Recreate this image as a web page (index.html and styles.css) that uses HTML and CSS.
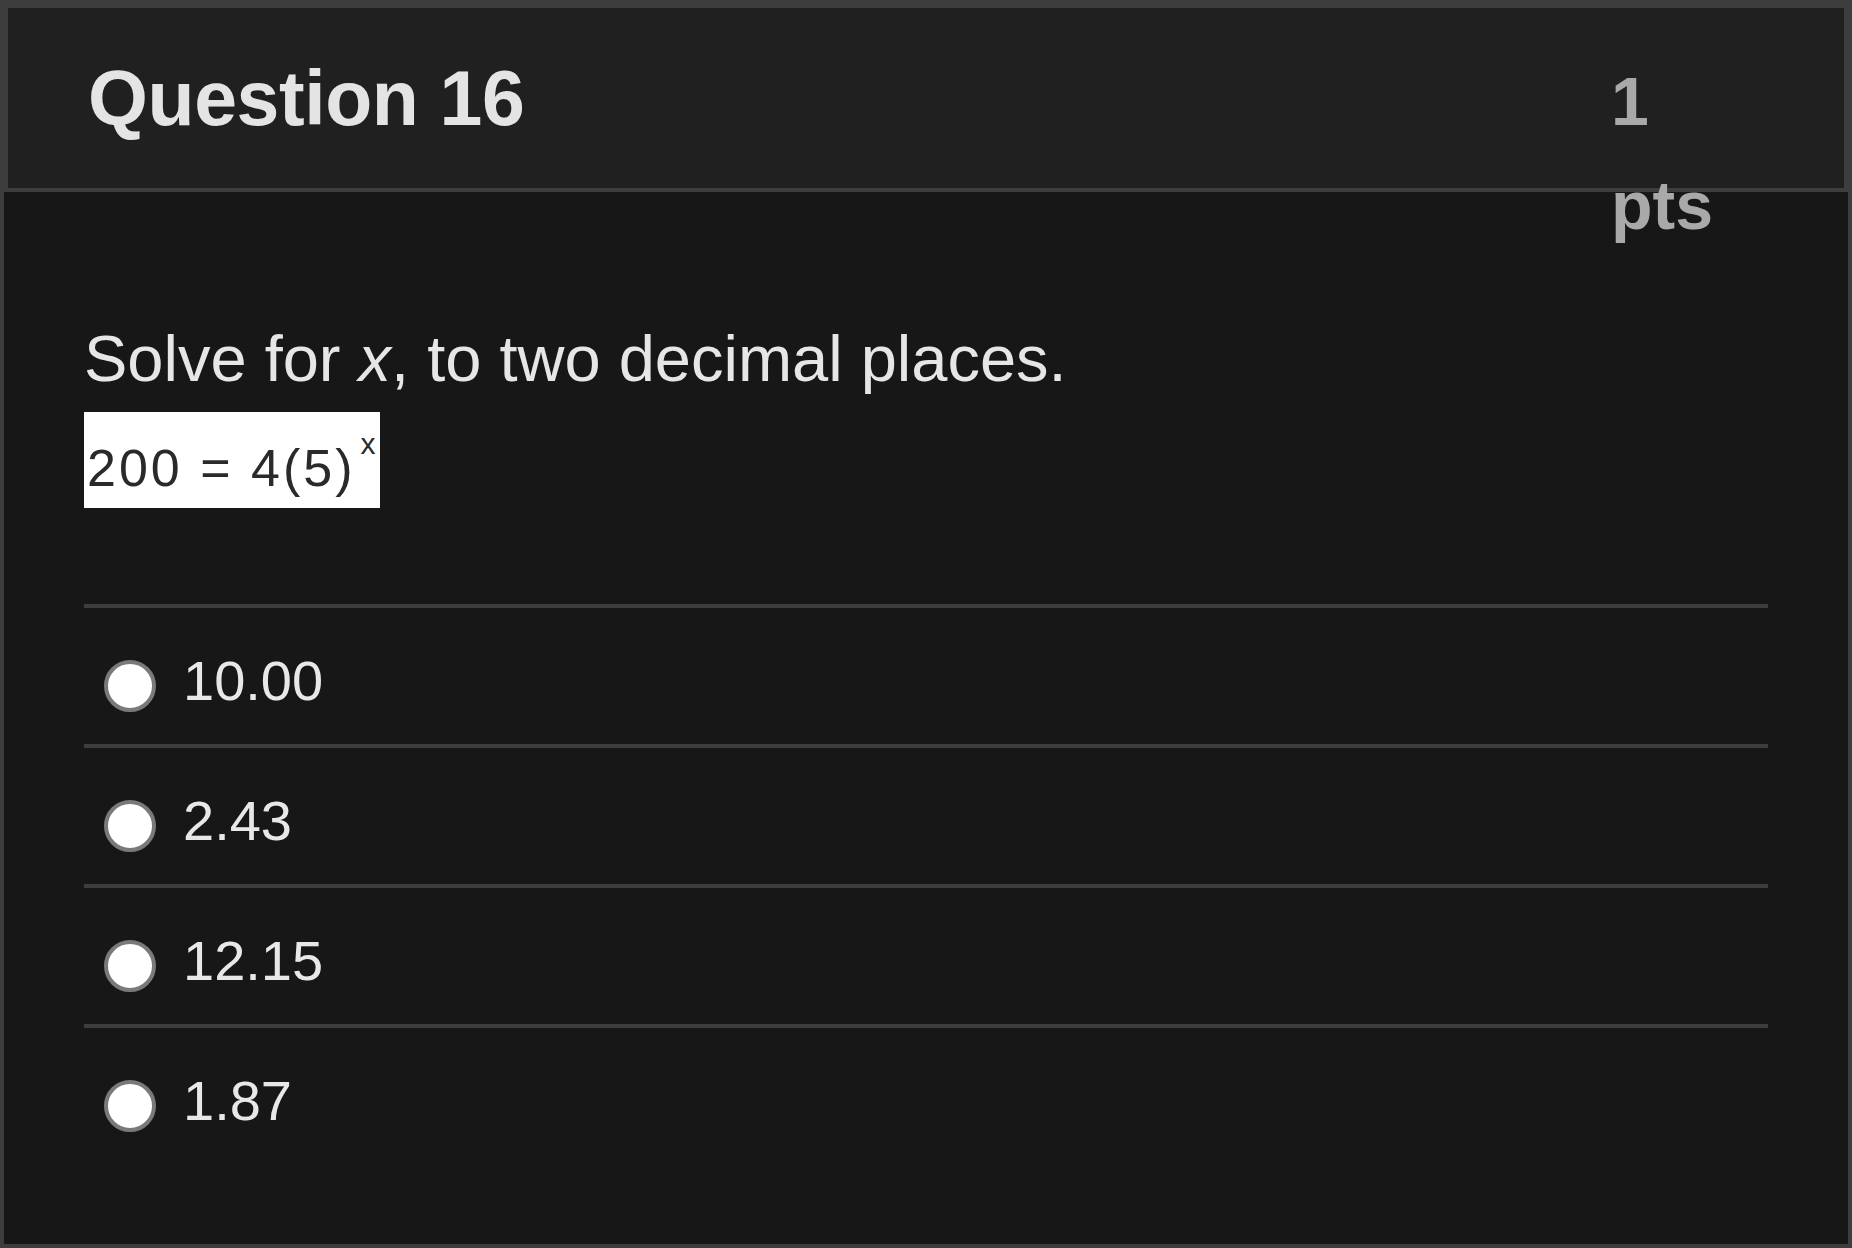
FILE: index.html
```html
<!DOCTYPE html>
<html lang="en">
<head>
<meta charset="utf-8">
<title>Question 16</title>
<link rel="stylesheet" href="styles.css">
</head>
<body>
<div class="card">
  <div class="card-header">
    <h2 class="q-title">Question 16</h2>
    <div class="q-points">1 pts</div>
  </div>
  <div class="card-body">
    <p class="q-text">Solve for <i>x</i>, to two decimal places.</p>
    <div class="equation">200 = 4(5)<span class="sup">x</span></div>
    <div class="answers">
      <label class="answer"><span class="radio"></span><span class="answer-text">10.00</span></label>
      <label class="answer"><span class="radio"></span><span class="answer-text">2.43</span></label>
      <label class="answer"><span class="radio"></span><span class="answer-text">12.15</span></label>
      <label class="answer"><span class="radio"></span><span class="answer-text">1.87</span></label>
    </div>
  </div>
</div>
</body>
</html>
```

FILE: styles.css
```css
html, body {
  margin: 0;
  padding: 0;
  background: #3d3d3d;
}

body {
  font-family: "Liberation Sans", Arial, Helvetica, sans-serif;
  color: #e6e6e6;
}

.card {
  width: 1852px;
  height: 1248px;
  box-sizing: border-box;
  border: 4px solid #3d3d3d;
  background: #171717;
  display: flex;
  flex-direction: column;
}

.card-header {
  height: 139px;
  padding: 41px 0 0 80px;
  border: 4px solid #3d3d3d;
  background: #202020;
  display: flex;
  align-items: baseline;
}

.q-title {
  flex: 1;
  margin: 0;
  font-size: 77px;
  line-height: 77px;
  font-weight: 700;
  letter-spacing: -0.4px;
  color: #e4e4e4;
}

.q-points {
  width: 112px;
  margin-right: 121px;
  font-size: 68px;
  line-height: 104px;
  font-weight: 700;
  color: #a9a9a9;
}

.card-body {
  flex: 1;
  padding: 129px 80px 80px 80px;
}

.q-text {
  margin: 0;
  font-size: 65px;
  line-height: 75px;
  color: #e6e6e6;
}

.equation {
  margin-top: 16px;
  width: 293px;
  height: 80px;
  padding: 16px 0 0 3px;
  box-sizing: content-box;
  background: #ffffff;
  color: #2a2a2a;
  font-family: "Liberation Sans", Arial, sans-serif;
  font-size: 52px;
  line-height: 80px;
  letter-spacing: 3px;
  white-space: nowrap;
}

.sup {
  display: inline-block;
  font-size: 30px;
  line-height: 0;
  letter-spacing: 0;
  vertical-align: 32px;
  margin-left: 5px;
}

.answers {
  margin-top: 96px;
}

.answer {
  height: 95px;
  padding-top: 41px;
  border-top: 4px solid #3d3d3d;
  display: flex;
  align-items: flex-start;
}

.radio {
  flex: 0 0 auto;
  width: 44px;
  height: 44px;
  margin: 11px 0 0 20px;
  border: 4px solid #7a7a7a;
  border-radius: 50%;
  background: #ffffff;
}

.answer-text {
  margin-left: 27px;
  font-size: 56px;
  line-height: 64px;
  color: #e8e8e8;
}
```
